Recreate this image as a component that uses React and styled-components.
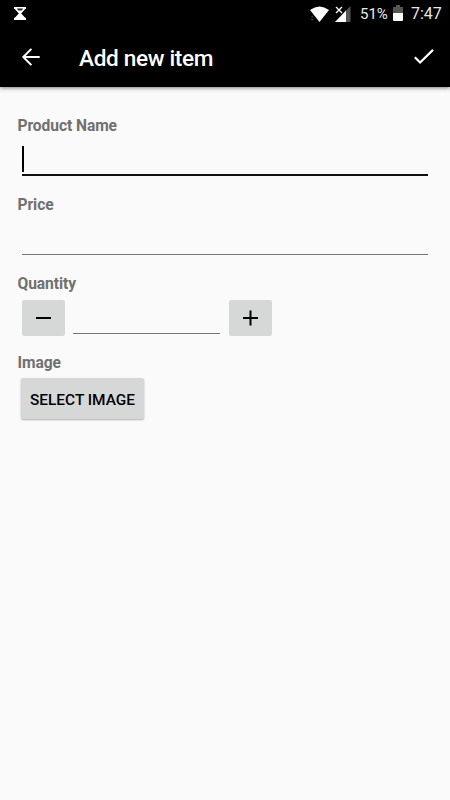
import styled, { createGlobalStyle } from 'styled-components';

const GlobalStyle = createGlobalStyle`
  body {
    margin: 0;
    background-color: #fafafa;
    font-family: Roboto, 'Liberation Sans', sans-serif;
  }
`;

const Screen = styled.main`
  display: flex;
  flex-direction: column;
  min-height: 800px;
  background-color: #fafafa;
`;

const Header = styled.header`
  height: 87px;
  background-color: #000;
  color: #fff;
  box-shadow: 0 1px 4px rgba(0, 0, 0, 0.5);
`;

const StatusBar = styled.div`
  display: flex;
  align-items: center;
  height: 27px;
  padding: 0 9px 0 14px;

  svg {
    display: block;
    flex: none;
  }
`;

const StatusIcons = styled.div`
  display: flex;
  align-items: center;
  margin-left: auto;
`;

const StatusText = styled.span`
  width: ${({ $width }) => $width}px;
  margin: 1px 0 0 ${({ $gap }) => $gap}px;
  font-size: ${({ $size }) => $size}px;
  line-height: 20px;
  color: #e8e8e8;
  white-space: nowrap;
`;

const Battery = styled.svg`
  margin: -1px 0 0 4px;
`;

const Signal = styled.svg`
  margin-left: 6px;
`;

const Toolbar = styled.div`
  display: flex;
  align-items: center;
  height: 60px;
  padding: 0 15px 0 21px;
`;

const IconButton = styled.button`
  display: flex;
  padding: 0;
  border: none;
  background: none;
  color: #fff;
`;

const Title = styled.h1`
  flex: 1;
  margin: 3px 0 0 38px;
  font-size: 22.6px;
  font-weight: 500;
  letter-spacing: -0.34px;
  line-height: 30px;
`;

const Form = styled.form`
  display: flex;
  flex-direction: column;
  padding: 28px 18px 0;
`;

const Field = styled.section`
  height: 79px;
`;

const Label = styled.label`
  display: block;
  margin-left: -0.5px;
  padding-top: 1px;
  font-size: 15.6px;
  font-weight: 700;
  letter-spacing: -0.08px;
  line-height: 20px;
  color: #707070;
`;

const Input = styled.div`
  display: flex;
  align-items: flex-end;
  box-sizing: border-box;
  height: 40px;
  margin: 0 4px;
  border-bottom: ${({ $active }) => ($active ? '2px solid #101010' : '1px solid #757575')};
`;

const Cursor = styled.span`
  width: 2px;
  height: 26px;
  margin-bottom: 2px;
  background-color: #000;
`;

const QuantityRow = styled.div`
  display: flex;
  padding: 6px 4px 0;
`;

const QuantityInput = styled.div`
  box-sizing: border-box;
  width: 147px;
  height: 34px;
  margin: 0 9px 0 8px;
  border-bottom: 1px solid #757575;
`;

const StepButton = styled.button`
  display: flex;
  align-items: center;
  justify-content: center;
  width: 43px;
  height: 36px;
  padding: 0;
  border: none;
  border-radius: 2px;
  background-color: #d6d7d7;
`;

const SelectButton = styled.button`
  width: 123px;
  height: 41px;
  margin: 5px 0 0 3px;
  padding: 2px 0 0;
  border: none;
  border-radius: 2px;
  background-color: #d6d7d7;
  box-shadow: 0 1px 2px rgba(0, 0, 0, 0.3);
  font-family: inherit;
  font-size: 15.4px;
  font-weight: 500;
  color: #000;
  white-space: nowrap;
`;

function HourglassIcon() {
  return (
    <svg width="12" height="13" viewBox="0 0 12 13">
      <path d="M0 0h12v2h-0.8L7.2 6.5l4 4.3H12V13H0v-2.2h0.8l4-4.3L0.8 2H0z" fill="#fff" />
      <path d="M2.8 1.6h6.4L7.6 3.4H4.4z" fill="#222" />
    </svg>
  );
}

function WifiIcon() {
  return (
    <svg width="19" height="16" viewBox="0 0 19 16">
      <path d="M0 4Q9.5 -3 19 4L9.5 16z" fill="#fff" />
      <path d="M0.8 11.6L2.2 9.8L3.6 11.6zM0.8 13L2.2 14.8L3.6 13z" fill="#4a4a4a" />
    </svg>
  );
}

function SignalIcon() {
  return (
    <Signal width="16" height="16" viewBox="0 0 16 16">
      <path d="M15.5 0v16h-4.5V4.5z" fill="#555" />
      <path d="M11 4.5V16H0z" fill="#fff" />
      <path d="M1 1l6 6M7 1l-6 6" stroke="#fff" strokeWidth="1.3" />
    </Signal>
  );
}

function BatteryIcon() {
  return (
    <Battery width="10" height="16" viewBox="0 0 10 16">
      <path d="M3 0h4v2h3v6H0V2h3z" fill="#555" />
      <path d="M0 8h10v7q0 1-1 1H1q-1 0-1-1z" fill="#fff" />
    </Battery>
  );
}

function ArrowIcon() {
  return (
    <svg width="20" height="20" viewBox="0 0 20 20" fill="none" stroke="currentColor" strokeWidth="2">
      <path d="M18.7 10H2.3M10.4 1.9L2.3 10l8.1 8.1" />
    </svg>
  );
}

function CheckIcon() {
  return (
    <svg width="22" height="18" viewBox="0 0 22 18" fill="none" stroke="currentColor" strokeWidth="2.2">
      <path d="M1.8 9.2l5.3 5.3L20 1.9" />
    </svg>
  );
}

function StepIcon({ plus }) {
  return (
    <svg width="15" height="16" viewBox="0 0 15 16" fill="none" stroke="#000" strokeWidth="2">
      <path d="M0 8h15" />
      {plus && <path d="M7.5 0.5v15" />}
    </svg>
  );
}

function App() {
  return (
    <Screen>
      <GlobalStyle />
      <Header>
        <StatusBar>
          <HourglassIcon />
          <StatusIcons>
            <WifiIcon />
            <SignalIcon />
            <StatusText $size={15} $width={29} $gap={9}>51%</StatusText>
            <BatteryIcon />
            <StatusText $size={16} $width={30} $gap={8}>7:47</StatusText>
          </StatusIcons>
        </StatusBar>
        <Toolbar>
          <IconButton type="button" aria-label="Back">
            <ArrowIcon />
          </IconButton>
          <Title>Add new item</Title>
          <IconButton type="button" aria-label="Save">
            <CheckIcon />
          </IconButton>
        </Toolbar>
      </Header>
      <Form>
        <Field>
          <Label>Product Name</Label>
          <Input $active>
            <Cursor />
          </Input>
        </Field>
        <Field>
          <Label>Price</Label>
          <Input />
        </Field>
        <Field>
          <Label>Quantity</Label>
          <QuantityRow>
            <StepButton type="button" aria-label="Decrease">
              <StepIcon />
            </StepButton>
            <QuantityInput />
            <StepButton type="button" aria-label="Increase">
              <StepIcon plus />
            </StepButton>
          </QuantityRow>
        </Field>
        <Field>
          <Label>Image</Label>
          <SelectButton type="button">SELECT IMAGE</SelectButton>
        </Field>
      </Form>
    </Screen>
  );
}

export default App;
